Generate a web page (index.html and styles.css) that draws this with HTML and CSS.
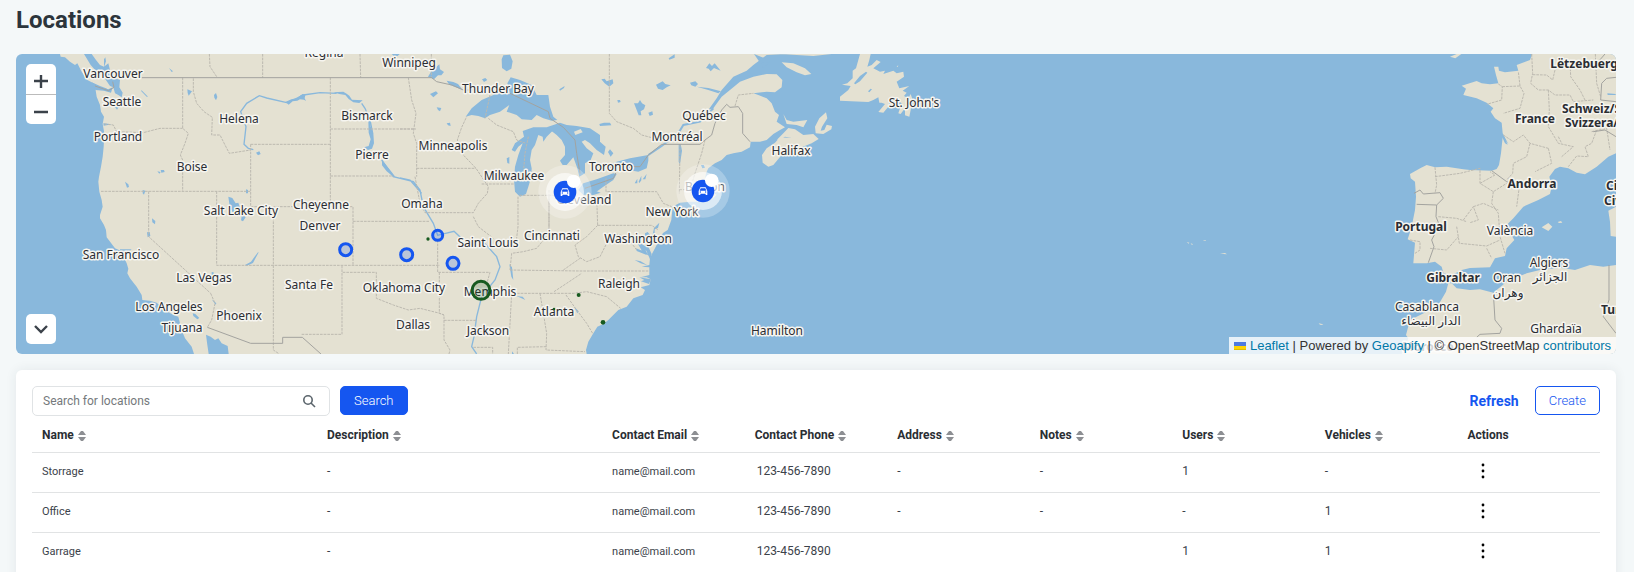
FILE: index.html
```html
<!DOCTYPE html>
<html lang="en">
<head>
<meta charset="utf-8">
<title>Locations</title>
<link rel="stylesheet" href="styles.css">
</head>
<body>
<main class="page">
<h1 class="title">Locations</h1>

<section class="map" aria-label="Map of locations">
<svg class="map-canvas" viewBox="0 0 1600 300" preserveAspectRatio="xMinYMin slice">
<defs>
<g id="car"><path d="M-8-11h16l5 11v12h-5v-4h-16v4h-5v-12zM-7-8l-3 7h20l-3-7zM-8 1a2 2 0 1 0 0 4 2 2 0 0 0 0-4zM8 1a2 2 0 1 0 0 4 2 2 0 0 0 0-4z" fill="#fff" fill-rule="evenodd"/></g>
</defs>
<g transform="scale(.333333) translate(-48 -162)">
<!-- North America -->
<path class="land" d="M180 162L182 170 195 172 210 185 225 195 232 190 245 215 262 240 275 247 300 258 318 265 330 272 310 270 285 258 290 290 300 315 303 335 312 350 308 372 313 400 311 440 308 470 303 500 297 530 295 545 298 575 305 600 308 620 300 645 300 655 312 675 318 690 320 712 345 745 362 752 380 790 385 806 382 820 390 835 410 860 425 885 427 900 450 902 470 908 495 930 520 945 535 950 545 990 555 1015 575 1040 582 1062H1760L1758 1050 1765 1025 1780 1000 1792 980 1810 972 1825 960 1840 945 1855 930 1880 920 1900 895 1928 885 1935 870 1922 862 1948 855 1952 838 1940 832 1922 832 1948 825 1948 802 1925 800 1948 795 1950 775 1957 760 1970 735 1976 715 1990 698 2003 690 2014 660 2018 620 2040 608 2070 605 2100 605 2140 595 2150 584 2135 575 2125 560 2115 540 2118 520 2125 505 2145 490 2165 480 2180 465 2200 460 2225 455 2250 442 2252 425 2280 425 2300 420 2320 402 2340 390 2355 382 2330 365 2337 345 2325 335 2315 310 2300 295 2275 285 2260 280 2300 275 2325 277 2345 262 2347 240 2330 223 2300 222 2260 230 2220 245 2190 270 2165 290 2140 325 2125 330 2150 295 2165 270 2200 230 2240 212 2260 195 2280 180 2300 165 2360 162Z"/>
<g transform="translate(1200 120)">
<path class="land" d="M1130 300L1150 280 1165 264 1185 268 1210 285 1240 282 1256 297 1235 310 1205 322 1170 332 1145 345 1120 375 1105 380 1088 368 1086 345 1100 325 1125 308 1140 292 1175 294 1155 290ZM1145 67L1180 70 1215 85 1234 102 1215 106 1190 97 1160 82ZM1150 222L1160 240 1180 245 1222 240 1210 262 1190 255 1160 252ZM1140 42H1295L1240 48Z"/>
<path class="land" d="M1245 260L1258 235 1278 217 1282 235 1266 260 1262 272 1273 270 1280 254 1296 258 1294 268 1270 282 1247 280Z"/>
</g>
<path class="land" transform="translate(2340 120)" d="M240 42H272L268 60 262 80 275 75 290 60 302 66 280 85 300 95 315 92 310 102 340 92 350 100 370 95 372 110 350 125 358 145 388 138 368 152 380 158 372 168 385 175 392 162 398 180 392 210 388 230 375 226 375 205 362 222 355 220 365 190 350 180 330 185 325 200 310 218 295 216 315 192 305 188 298 188 295 172 280 180 265 186 180 182 180 170 205 150 212 138 186 134 202 130 218 115 218 92 228 85ZM350 80l5-5-2 6z"/>
<!-- Europe and North Africa -->
<g transform="translate(3540 120)">
<path class="land" d="M1057 42L1050 60 1010 75 1015 92 975 97 957 92 955 80 942 80 948 105 955 130 930 133 905 130 890 123 845 137 858 146 850 165 890 175 920 188 940 205 932 215 945 235 965 248 968 280 985 312 968 292 963 340 957 375 950 387 935 392 870 390 850 388 800 380 765 382 740 375 722 384 690 402 692 415 705 425 708 470 705 510 695 560 683 598 705 608 700 670 740 670 765 665 785 680 790 698 810 708 845 690 870 684 930 682 945 655 975 648 980 625 1003 600 985 570 980 555 1000 535 1030 500 1075 480 1110 462 1115 440 1108 410 1125 387 1140 380 1165 385 1190 398 1215 403 1250 380 1285 350 1308 340V42Z"/>
<path class="land" d="M815 730L830 745 870 750 900 748 940 758 980 725 1040 700 1080 690 1140 683 1185 690 1230 675 1270 680 1308 675V942H665L685 895 678 885 690 840 740 815 775 795 798 755 805 730ZM1285 512L1308 500V590L1292 588 1290 545ZM1085 562L1105 549 1117 560 1105 573ZM1045 587l12-3-5 8zM1133 546l10-3 4 5-10 1zM810 50l20-8h14l-18 13zM20 606l8 2-2 3zM32 610l8 3-5 1zM68 601l8-1 2 3zM120 641l15-2 6 4zM416 850l10 2 4 3-10-1z"/>
</g>
<!-- Inland and coastal water -->
<g class="water">
<path d="M252 162L272 195 290 215 312 232 330 258 340 262 345 280 355 285 365 292 368 278 358 262 360 240 345 235 330 210 325 190 312 200 300 195 288 180 275 162ZM312 178l4-6 2 12-6 18z"/>
<path d="M275 247L300 262 325 268 338 262 333 278 312 272 286 270ZM345 322l14-5-8 12zM310 370l25 3-24 4zM507 204l12 10-4 2zM424 270l20 20-4 0-16-16zM562 268l14 6-6 8-4 5-3-8zM642 285l6-6 4 12-4 10-5-8zM768 458l10-4 4 8-8 4zM472 514l10 2-4 5zM482 510l10 0 2 6-10 2zM375 545l10 8 2 8-6 2zM428 570l8 2-4 12-4-4zM738 568l6 2 0 10-6 0zM362 758l8-5 6 9zM456 655l10 8-1 10-8-6zM441 697l8-1 2 12-8 4zM685 590l12 4 10 16 8-2 4 12-6 6 14 18 10 8-8 12-6-3 2-12-28-14-8-16zM735 795l18-10 22-30 0 4-16 30-20 9zM360 748l35 0-5 4-30 0zM578 940l8 2 12 12-6 4-12-10zM635 898l14 12-2 4zM635 816l6 1 0 8-6 2z"/>
<path d="M618 1004L632 1010 645 1020 655 1015 665 1030 683 1038 686 1062H626L622 1035Z"/>
<path d="M856 306l18-8 18-4 10-8 6-4 8 3-2 10 4 8-6-4-12-1-8 4-14 2-12 10zM1000 277l30-2 10 6 8 6 8 12 32 2-10 8-18-2-14-10-10-12-18-3zM1105 360l6 0 1 20 8 20 2 30-6 16-12 4-12-8 14-4 6-20-6-20zM1146 480l8 10 18 22 14 18-6 0-20-16-14-18zM1175 162l24 0-6 6-12-1z"/>
</g>
<g class="water" transform="translate(1200 120)">
<path d="M197 230L215 205 245 180 280 165 300 150 330 162 322 130 332 112 360 120 395 135 410 165 445 165 450 200 460 230 472 240 455 242 430 235 410 225 395 240 365 238 350 225 320 215 328 195 300 215 270 225 255 235 235 228 215 225Z"/>
<path d="M368 273L400 262 440 262 470 265 455 275 440 290 430 305 428 290 415 285 405 315 395 330 390 360 395 385 394 410 385 440 378 462 360 470 345 455 342 420 345 380 355 345 368 310 355 320 345 335 335 330 345 310 372 290Z"/>
<path d="M440 262L480 248 500 255 530 258 570 265 600 285 600 305 617 320 612 345 590 330 570 310 555 300 545 305 560 325 580 340 572 360 555 370 555 400 538 410 532 385 520 352 500 375 488 375 480 362 495 345 495 320 485 300 470 285Z"/>
<path d="M535 450L550 430 590 418 640 400 650 402 640 420 610 440 580 462 550 465ZM620 386L650 365 690 355 745 345 745 362 740 385 715 395 660 385Z"/>
<path d="M305 58l5-12 20-2 8 20-4 22-14 8-14-10zM92 58l14 0 0 25 12-10 2 15 12 8-8 10-10 0-12 12-18-8 10-16zM140 122l20 4 14 6 14 18-20-8-20-8zM110 202l14 2-4 10-6-4zM90 162l18-8 6 6-14 12zM140 250l10-2 2 10-8-2zM246 118l10-4 6 6-10 6zM478 148l16-10-2 6-12 8zM320 355l8-4 0 20-6-2zM604 118l10-2 6 8 18-6 2 12-12 10-14-10zM598 252l14-4 18 0 4 8-34 2zM702 190l12 0 6-10 6 10 10 6-4 12-10 6 2 12-8 0-6-16zM652 180l8 0 2 6-8 2zM745 218l12-4 2 10-10 4zM768 134l20-10 8 8 16 4-12 6-12 8-14-4zM870 128l16-4 8 8-8 8-12-4zM918 84l10-14 8 8 8-8 18 22-20-8-10 10-6-8zM806 55l18-12 0 10-16 6zM624 336l6-8 10 12-8 10zM836 312l6 0 4 20-6 40-4-6zM903 375l8 0 4 8-8 2zM704 430l8-14 0 14zM716 425l8-18 0 14-6 8zM728 418l12-16-4 16zM890 140l35 4 38 10-8 6-30-10zM565 460l25-6 12 4-24 8zM1062 42l30 12-15 10zM1080 70l30-5-20 20z"/>
<path d="M522 275l20-8 6 10-22 8z" fill="#e4e1d2"/>
</g>
<g class="water" transform="translate(1200 570)">
<path d="M328 222l8 10 4 38-6-10zM348 318l20 2 8 10-18-8zM522 350l14 14-4 6zM778 98l-4 16-10 4 0 12 8 20-4 4-10-20 4-20zM735 130l8-4 8 10-8 30 12 26-4 18-12-28-18-8-6-18 20 12zM704 145l10 2 20 30 12 20-20-14zM708 175l30 12 2 8-30-12zM718 262l35 6-6 14-24-8 10-4zM704 210l18 4 20 12-20-6zM336 484l6 8-6 0z"/>
</g>
<path class="water" transform="translate(2340 120)" d="M222 130L240 108 258 95 262 98 240 124 226 133ZM264 154l8-8 4 2-8 9z"/>
<path class="water" transform="translate(3540 120)" d="M1282 160l25 2v3l-24 0zM965 288l8 4 10 22-8-4z"/>
<!-- Rivers -->
<g class="river">
<path d="M760 449L745 445 732 433 738 380 722 335 740 310 778 287 800 294 860 308 880 300 910 285 960 278 1010 280M1085 310L1095 325 1110 360M1110 360L1118 400M1145 480L1180 530 1240 545 1260 570 1270 620 1300 670 1313 706 1362 694 1390 720 1450 725 1490 770 1500 800 1485 840 1445 890 1430 950 1422 1010 1415 1040 1430 1062M1200 534L1230 540 1265 580"/>
<path d="M1945 465L1985 438 2035 400 2050 375 2100 365 2140 325" stroke-width="6"/>
</g>
<!-- State and province borders -->
<g class="state">
<path d="M548 233V385L565 400 555 430 541 465 548 480V574M313 372L340 375 350 395 430 398 480 385H548M580 235V275L590 310 612 335 637 352 635 405 660 405 675 435 688 460 752 450M752 433H991M752 433V620H1059V796M991 233V620M991 387H1245M991 528H1180M303 574H752M446 574V710L632 880M650 574V796H1320M820 620V1050L835 1060M1059 664H1290M1026 797V1003H905M1028 817H1129V895L1180 915 1225 930 1260 925 1320 940 1332 945V1020L1350 1050 1347 1062M628 162L630 200 650 230M788 162V233M1080 162L1082 233M1225 233L1235 300 1248 340 1240 400 1250 430 1250 530M632 880L645 910 635 960 622 982"/>
<path transform="translate(1200 120)" d="M50 385H228M0 267H48M45 410L60 490 75 518H220L235 490 262 460 265 440 228 385 190 345 172 300 185 262 200 230M265 235L290 255 340 275 350 300 378 310M245 432H342M358 466H480M354 470V560L348 610M447 465V580M618 415V455H770L790 490 815 500M628 42V220L650 245 700 265 725 285 755 293M840 315L838 460M915 300L905 340 885 400 870 450M838 449H910M1005 198L1015 165 1060 160M590 470L593 556M385 290L375 340 370 400M270 165L255 235M94 42V112M120 40"/>
<path transform="translate(1200 570)" d="M113 150V247H270L262 275M118 247V370L132 375M132 391H228M330 240L540 243H748M340 310H520L560 305 620 320 662 355M335 310L325 492M420 310L440 430 438 480 555 485M593 106H755L775 120M593 106L560 140 525 165 535 200 560 215 600 200 620 160 640 130 680 140 710 180M447 0V130L410 175 370 185 335 190 330 240M462 305L500 280 545 250M490 240L540 205M498 315L530 360 560 400 578 430M220 472H278V492M352 492V472L440 470M220 80L235 110 280 145"/>
<path transform="translate(3540 120)" d="M955 132L967 140 965 180 920 193M967 140L1020 138 1032 160 1020 205 970 220M1020 138L1015 95M1055 42L1058 100 1052 130 1075 150 1105 150 1125 165 1170 165 1180 185 1240 180M1058 104L1100 105 1118 120 1125 90 1170 60 1172 110 1200 150 1215 180M1105 150L1108 210 1105 260 1135 310 1180 320 1145 350M970 285L1000 305 1030 285 1050 310 1105 325M1050 310L1040 350 1000 370 998 400 980 420M1105 325L1115 370 1065 395M1135 290L1145 310M1250 270L1235 310 1215 320 1225 350 1190 348 1165 380M765 382L770 435 765 460M765 410L840 400 900 385 900 430 940 455 980 430M900 430L945 405 930 395M940 455L935 490 955 520 960 590 975 640M880 500L910 490 955 510M850 540L880 500 895 540 870 548M775 530L830 535 860 545M830 560L838 610 920 618 960 600M750 625L800 630 835 590M920 625L935 655M1018 440L1010 500M690 600L720 605 720 630 705 640M1246 42L1250 130 1262 170M1235 275L1280 265 1290 330"/>
</g>
<!-- Country borders -->
<g class="country">
<path d="M425 233H1295L1310 245 1355 255 1390 270H1430M1530 280L1645 335 1650 355 1690 382 1725 420 1730 460 1740 520M1755 565L1840 535 1848 518M1900 500H1920L1945 465 1985 433H2100L2115 420 2135 405 2145 370 2165 330 2180 313 2190 322 2215 320 2228 340 2228 400 2250 425M622 982L752 1030H848V1012H907L963 1062M285 258L325 272 342 262 338 245"/>
<path transform="translate(3540 120)" d="M702 460L720 450 730 462 780 458 790 475 770 495 710 493M770 495L768 530 778 555 755 600 762 620 745 668M935 392L980 425 1040 442 1068 448M1262 180L1265 130 1280 115 1308 112M1262 180L1308 185M1240 275L1275 270 1308 290M940 758L945 840 965 865 960 880 900 883 890 892M1287 675V780L1270 830 1308 880M1255 65L1275 42"/>
</g>
</g>

<!-- Place names -->
<g class="places" transform="translate(-16 -54)">
<text x="324" y="57">Regina</text><text x="409" y="67">Winnipeg</text><text x="113" y="78">Vancouver</text><text x="122" y="106">Seattle</text><text x="118" y="141">Portland</text><text x="239" y="123">Helena</text><text x="367" y="120">Bismarck</text><text x="372" y="159">Pierre</text><text x="192" y="171">Boise</text><text x="498" y="93">Thunder Bay</text><text x="453" y="150">Minneapolis</text><text x="514" y="180">Milwaukee</text><text x="704" y="120">Québec</text><text x="677" y="141">Montréal</text><text x="791" y="155">Halifax</text><text x="611" y="171">Toronto</text><text x="914" y="107">St. John's</text><text x="422" y="208">Omaha</text><text x="705" y="191">Boston</text><text x="584" y="204">Cleveland</text><text x="672" y="216">New York</text><text x="241" y="215">Salt Lake City</text><text x="321" y="209">Cheyenne</text><text x="320" y="230">Denver</text><text x="121" y="259">San Francisco</text><text x="204" y="282">Las Vegas</text><text x="309" y="289">Santa Fe</text><text x="404" y="292">Oklahoma City</text><text x="169" y="311">Los Angeles</text><text x="239" y="320">Phoenix</text><text x="182" y="332">Tijuana</text><text x="413" y="329">Dallas</text><text x="488" y="247">Saint Louis</text><text x="552" y="240">Cincinnati</text><text x="638" y="243">Washington</text><text x="490" y="296">Memphis</text><text x="619" y="288">Raleigh</text><text x="554" y="316">Atlanta</text><text x="488" y="335">Jackson</text><text x="777" y="335">Hamilton</text>
<text x="1510" y="235">València</text><text x="1549" y="267">Algiers</text><text x="1550" y="281">الجزائر</text><text x="1507" y="282">Oran</text><text x="1508" y="297">وهران</text><text x="1427" y="311">Casablanca</text><text x="1431" y="325">الدار البيضاء</text><text x="1556" y="333">Ghardaïa</text>
<g class="places-country"><text x="1584" y="68">Lëtzebuerg</text><text x="1535" y="123">France</text><text class="from-start" x="1562" y="113">Schweiz/Suisse</text><text class="from-start" x="1565" y="127">Svizzera/Svizra</text><text x="1532" y="188">Andorra</text><text x="1421" y="231">Portugal</text><text x="1453" y="282">Gibraltar</text><text class="from-start" x="1606" y="190">Città</text><text class="from-start" x="1604" y="205">Civitas</text><text class="from-start" x="1601" y="314">Tunisia</text><text x="1428" y="351">Morocco</text></g>
</g>

<!-- Area rings, dots and vehicle clusters -->
<g transform="scale(.333333) translate(-48 -162)">
<g class="ring"><circle cx="1037" cy="749" r="18"/><circle cx="1220" cy="764" r="18"/><circle cx="1313" cy="706" r="15"/><circle cx="1359" cy="790" r="18"/></g>
<circle class="ring-green" cx="1443" cy="871" r="27"/>
<g class="dot"><circle cx="1284" cy="717" r="5"/><circle cx="1736" cy="885" r="6"/><circle cx="1662" cy="927" r="4"/><circle cx="1809" cy="967" r="7"/></g>
<g transform="translate(1695 576)"><circle class="halo" r="80"/><circle class="halo-inner" r="57"/><circle class="core" r="34"/><use href="#car"/><circle class="badge" cx="26" cy="-32" r="20"/></g>
<g transform="translate(2109 573)"><circle class="halo" r="80"/><circle class="halo-inner" r="57"/><circle class="core" r="34"/><use href="#car"/><circle class="badge" cx="26" cy="-32" r="20"/></g>
</g>
</svg>

<div class="map-zoom">
<button class="map-button" type="button" aria-label="Zoom in"><svg viewBox="0 0 14 14" width="14" height="14"><path d="M7 1v13M0 7h14"/></svg></button>
<button class="map-button" type="button" aria-label="Zoom out"><svg viewBox="0 0 14 14" width="14" height="14"><path d="M0 7h14"/></svg></button>
</div>
<button class="map-button map-toggle" type="button" aria-label="Collapse map"><svg viewBox="0 0 14 14" width="14" height="14"><path d="M1 4l6 6 6-6"/></svg></button>
<div class="attribution"><a href="#leaflet"><svg class="flag" viewBox="0 0 12 8" width="12" height="8"><path fill="#4c7be1" d="M0 0h12v4H0z"/><path fill="#ffd500" d="M0 4h12v3H0z"/><path fill="#e0bc00" d="M0 7h12v1H0z"/></svg> Leaflet</a> | Powered by <a href="#geoapify">Geoapify</a> | © OpenStreetMap <a href="#contributors">contributors</a></div>
</section>

<section class="card">
<div class="toolbar">
<form class="search" role="search">
<div class="search-box"><input class="search-input" type="text" aria-label="Search for locations" placeholder="Search for locations"><svg class="search-icon" viewBox="0 0 14 14" width="14" height="14"><circle cx="6" cy="6" r="4.2"/><path d="M9 9l4 4"/></svg></div>
<button class="button button-primary" type="button">Search</button>
</form>
<div class="actions"><button class="button button-link" type="button">Refresh</button><button class="button button-outline" type="button">Create</button></div>
</div>
<table class="table">
<colgroup><col class="col-wide"><col class="col-wide"><col><col><col><col><col><col><col></colgroup>
<thead><tr>
<th>Name <svg class="sort" viewBox="0 0 8 10"><path d="M0 4l3-4h2l3 4zM0 6h8l-3 4h-2z"/></svg></th>
<th>Description <svg class="sort" viewBox="0 0 8 10"><path d="M0 4l3-4h2l3 4zM0 6h8l-3 4h-2z"/></svg></th>
<th>Contact Email <svg class="sort" viewBox="0 0 8 10"><path d="M0 4l3-4h2l3 4zM0 6h8l-3 4h-2z"/></svg></th>
<th>Contact Phone <svg class="sort" viewBox="0 0 8 10"><path d="M0 4l3-4h2l3 4zM0 6h8l-3 4h-2z"/></svg></th>
<th>Address <svg class="sort" viewBox="0 0 8 10"><path d="M0 4l3-4h2l3 4zM0 6h8l-3 4h-2z"/></svg></th>
<th>Notes <svg class="sort" viewBox="0 0 8 10"><path d="M0 4l3-4h2l3 4zM0 6h8l-3 4h-2z"/></svg></th>
<th>Users <svg class="sort" viewBox="0 0 8 10"><path d="M0 4l3-4h2l3 4zM0 6h8l-3 4h-2z"/></svg></th>
<th>Vehicles <svg class="sort" viewBox="0 0 8 10"><path d="M0 4l3-4h2l3 4zM0 6h8l-3 4h-2z"/></svg></th>
<th>Actions</th>
</tr></thead>
<tbody>
<tr><td class="text">Storrage</td><td>-</td><td class="text">name@mail.com</td><td class="phone">123-456-7890</td><td>-</td><td>-</td><td>1</td><td>-</td><td><button class="more" type="button" aria-label="Actions for Storrage"><svg viewBox="0 0 4 16" width="4" height="16"><circle cx="2" cy="2" r="1.4"/><circle cx="2" cy="8" r="1.4"/><circle cx="2" cy="14" r="1.4"/></svg></button></td></tr>
<tr><td class="text">Office</td><td>-</td><td class="text">name@mail.com</td><td class="phone">123-456-7890</td><td>-</td><td>-</td><td>-</td><td>1</td><td><button class="more" type="button" aria-label="Actions for Office"><svg viewBox="0 0 4 16" width="4" height="16"><circle cx="2" cy="2" r="1.4"/><circle cx="2" cy="8" r="1.4"/><circle cx="2" cy="14" r="1.4"/></svg></button></td></tr>
<tr><td class="text">Garrage</td><td>-</td><td class="text">name@mail.com</td><td class="phone">123-456-7890</td><td></td><td></td><td>1</td><td>1</td><td><button class="more" type="button" aria-label="Actions for Garrage"><svg viewBox="0 0 4 16" width="4" height="16"><circle cx="2" cy="2" r="1.4"/><circle cx="2" cy="8" r="1.4"/><circle cx="2" cy="14" r="1.4"/></svg></button></td></tr>
</tbody>
</table>
</section>
</main>
</body>
</html>
```
FILE: styles.css
```css
* { box-sizing: border-box; }
body {
  margin: 0;
  background: #f4f8f9;
  color: #3b424a;
  font-family: Roboto, sans-serif;
  font-size: 12px;
}
button, input { font-family: inherit; }
.page {
  display: flex;
  flex-direction: column;
  gap: 16px;
  padding: 0 18px 0 16px;
}
.title {
  margin: 0;
  padding: 4px 0 2px;
  color: #2c353c;
  font-size: 24px;
  font-weight: 700;
  line-height: 32px;
}

/* Map */
.map {
  position: relative;
  height: 300px;
  overflow: hidden;
  border-radius: 6px;
  background: #89b8dc;
}
.map-canvas { display: block; width: 100%; height: 100%; }
.land { fill: #e4e1d2; }
.water { fill: #89b8dc; }
.river { fill: none; stroke: #89b8dc; stroke-width: 4; }
.state { fill: none; stroke: #bcb9b0; stroke-width: 3; stroke-dasharray: 8 3; }
.country { fill: none; stroke: #a3a39f; stroke-width: 3; }
.places {
  fill: #2b2d33;
  stroke: #f6f5f0;
  stroke-width: 3px;
  stroke-linejoin: round;
  paint-order: stroke;
  font-family: "Noto Sans", "DejaVu Sans", sans-serif;
  font-size: 12px;
  text-anchor: middle;
}
.places-country { font-weight: 700; }
.from-start { text-anchor: start; }
.ring { fill: #1556f0; fill-opacity: .2; stroke: #1556f0; stroke-width: 9; }
.ring-green { fill: #175a1f; fill-opacity: .2; stroke: #175a1f; stroke-width: 9; }
.dot { fill: #175a1f; }
.halo { fill: #fff; opacity: .25; }
.halo-inner { fill: #fff; opacity: .6; }
.core { fill: #1556f0; }
.badge { fill: #fff; }
.map-zoom {
  position: absolute;
  top: 10px;
  left: 10px;
  overflow: hidden;
  border-radius: 5px;
}
.map-button {
  display: flex;
  align-items: center;
  justify-content: center;
  width: 30px;
  height: 30px;
  padding: 0;
  border: 0;
  background: #fff;
}
.map-zoom .map-button { padding-top: 4px; }
.map-zoom .map-button + .map-button { border-top: 1px solid #bbb; }
.map-button svg { fill: none; stroke: #3b424a; stroke-width: 2.4; }
.map-toggle {
  position: absolute;
  bottom: 10px;
  left: 10px;
  border-radius: 5px;
}
.attribution {
  position: absolute;
  right: 0;
  bottom: 0;
  padding: 0 5px;
  background: rgba(255, 255, 255, .8);
  color: #333;
  font-family: "Liberation Sans", Arial, sans-serif;
  font-size: 13px;
  line-height: 17px;
}
.attribution a { color: #0078a8; text-decoration: none; }

/* Locations table */
.card {
  min-height: 220px;
  padding: 16px;
  border-radius: 6px;
  background: #fff;
  box-shadow: 0 0 12px rgba(40, 50, 70, .08);
}
.toolbar { display: flex; justify-content: space-between; align-items: flex-start; }
.search, .actions { display: flex; align-items: flex-start; gap: 10px; }
.search-box { position: relative; width: 298px; }
.search-input {
  width: 100%;
  height: 30px;
  padding: 0 40px 0 10px;
  border: 1px solid #e0e3e5;
  border-radius: 5px;
  background: #fff;
  color: #3b424a;
  font-size: 12px;
}
.search-input::placeholder { color: #75797c; }
.search-icon {
  position: absolute;
  top: 8px;
  right: 14px;
  fill: none;
  stroke: #5b656c;
  stroke-width: 1.6;
}
.button {
  height: 29px;
  padding: 0 13px;
  border: 1px solid #1556f0;
  border-radius: 5px;
  font-size: 13px;
  font-weight: 300;
}
.button-primary { background: #1556f0; color: #fff; }
.button-outline { background: #fff; color: #1556f0; }
.button-link {
  padding: 0 5px;
  border-color: transparent;
  background: none;
  color: #1556f0;
  font-size: 14px;
  font-weight: 700;
}
.table { width: 100%; border-collapse: collapse; table-layout: fixed; }
.col-wide { width: 18.18%; }
.table th, .table td {
  padding: 0 10px;
  border-bottom: 1px solid #e1e3e4;
  text-align: left;
  white-space: nowrap;
}
.table th {
  height: 36px;
  padding-top: 2px;
  color: #2a2e33;
  font-size: 12px;
  font-weight: 700;
}
.table td { height: 40px; padding-bottom: 2px; font-size: 12px; }
.table .text { font-size: 11px; }
.table .phone { padding-left: 12px; }
.sort { width: 8px; height: 10px; margin-left: 1px; vertical-align: -2px; fill: #8d8f93; }
.more {
  display: flex;
  align-items: center;
  justify-content: center;
  width: 32px;
  height: 32px;
  padding: 0;
  border: 0;
  background: none;
}
```
